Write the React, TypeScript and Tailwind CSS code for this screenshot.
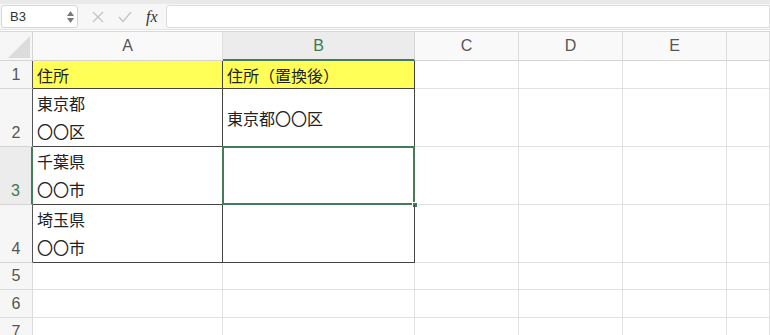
import React from "react"

const font = "font-['Liberation_Sans','Noto_Sans_CJK_JP',sans-serif]"
const jp = "font-['Noto_Sans_CJK_JP','Liberation_Sans',sans-serif]"

const cols = ["A", "B", "C", "D", "E", ""]
const rowHeights = ["h-[28px]", "h-[58px]", "h-[58px]", "h-[58px]", "h-[27px]", "h-[28px]", "h-[28px]"]

type CellProps = { children?: React.ReactNode; className?: string }

function Cell({ children, className = "" }: CellProps) {
  return <div className={`border-r border-b ${className}`}>{children}</div>
}

export default function App() {
  return (
    <div className={`w-[770px] h-[335px] overflow-hidden bg-white ${font}`}>
      {/* formula bar */}
      <div className="h-[4px] bg-[#e9e9e9]" />
      <div className="h-[25px] flex items-center bg-[#f7f7f7]">
        <div className="ml-[1px] w-[77px] h-[23px] bg-white border border-[#d6d6d6] rounded-[3px] flex items-center justify-between pl-[8px] pr-[3px]">
          <span className="text-[13px] text-[#333]">B3</span>
          <span className="flex flex-col items-center leading-none text-[#777]">
            <svg width="7" height="5" viewBox="0 0 7 5"><path d="M3.5 0 L7 5 L0 5 Z" fill="#7a7a7a" /></svg>
            <svg width="7" height="5" viewBox="0 0 7 5" className="mt-[2px]"><path d="M0 0 L7 0 L3.5 5 Z" fill="#7a7a7a" /></svg>
          </span>
        </div>
        <svg width="12" height="12" viewBox="0 0 12 12" className="ml-[14px]">
          <path d="M1 1 L11 11 M11 1 L1 11" stroke="#c4c4c4" strokeWidth="1.4" />
        </svg>
        <svg width="14" height="12" viewBox="0 0 14 12" className="ml-[14px]">
          <path d="M1 6 L5 10.5 L13 1" stroke="#c4c4c4" strokeWidth="1.4" fill="none" />
        </svg>
        <span className="ml-[14px] text-[16px] italic text-[#333] font-['Liberation_Serif',serif]">fx</span>
        <div className="ml-[8px] flex-1 h-[23px] bg-white border border-[#dcdcdc] rounded-l-[3px]" />
      </div>
      <div className="h-[1px] bg-[#e4e4e4]" />
      <div className="h-[1px] bg-white" />
      <div className="h-[1px] bg-[#d8d8d8]" />

      {/* sheet grid */}
      <div className="grid grid-cols-[33px_190px_192px_104px_104px_104px_43px]">
        {/* header row */}
        <div className="relative h-[29px] bg-[#f6f6f6] border-r border-b border-[#d4d4d4]">
          <div className="absolute right-[2px] bottom-[2px] w-0 h-0 border-l-[22px] border-l-transparent border-b-[22px] border-b-[#dcdcdc]" />
        </div>
        {cols.map((c) => (
          <div
            key={c || "f"}
            className={`h-[29px] flex items-center justify-center text-[16px] border-r ${
              c === "B"
                ? "bg-[#ececec] text-[#3b7a4c] border-b-2 border-b-[#467b57] border-r-[#d4d4d4]"
                : "bg-[#f9f9f9] text-[#555] border-b border-b-[#d4d4d4] border-r-[#dedede]"
            }`}
          >
            {c}
          </div>
        ))}

        {rowHeights.map((h, i) => {
          const r = i + 1
          const inTable = r <= 4
          const selected = r === 3
          return (
            <React.Fragment key={r}>
              <div
                className={`${h} flex items-end justify-center pb-[5px] text-[16px] leading-none border-b ${
                  selected
                    ? "bg-[#ececec] text-[#3b7a4c] border-r-2 border-r-[#467b57] border-b-[#d4d4d4]"
                    : inTable
                    ? "bg-[#f6f6f6] text-[#555] border-r border-r-[#555] border-b-[#d4d4d4]"
                    : "bg-[#f6f6f6] text-[#555] border-r border-r-[#dcdcdc] border-b-[#dcdcdc]"
                }`}
              >
                {r}
              </div>
              {/* column A */}
              <Cell
                className={`${h} ${inTable ? "border-[#444]" : "border-[#e1e1e1]"} ${r === 1 ? "bg-[#ffff57]" : ""} ${jp} text-[16px] text-[#222] pl-[4px]`}
              >
                {r === 1 && <div className="h-full flex items-center">住所</div>}
                {r === 2 && (
                  <div className="leading-[28px]">
                    <div>東京都</div>
                    <div>〇〇区</div>
                  </div>
                )}
                {r === 3 && (
                  <div className="leading-[28px]">
                    <div>千葉県</div>
                    <div>〇〇市</div>
                  </div>
                )}
                {r === 4 && (
                  <div className="leading-[28px]">
                    <div>埼玉県</div>
                    <div>〇〇市</div>
                  </div>
                )}
              </Cell>
              {/* column B */}
              <Cell
                className={`${h} relative ${inTable ? "border-[#444]" : "border-r-[#e1e1e1] border-b-[#e1e1e1]"} ${r === 1 ? "bg-[#ffff57]" : ""} ${jp} text-[16px] text-[#222] pl-[4px]`}
              >
                {r === 1 && <div className="h-full flex items-center">住所（置換後）</div>}
                {r === 2 && <div className="h-full flex items-center">東京都〇〇区</div>}
                {selected && (
                  <>
                    <div className="absolute -left-[1px] -top-[1px] -right-[1px] -bottom-[1px] border-2 border-[#467b57]" />
                    <div className="absolute -right-[4px] -bottom-[4px] w-[6px] h-[6px] bg-[#467b57] border border-white" />
                  </>
                )}
              </Cell>
              {["C", "D", "E", "F"].map((c) => (
                <Cell key={c} className={`${h} border-[#e1e1e1]`} />
              ))}
            </React.Fragment>
          )
        })}
      </div>
    </div>
  )
}
